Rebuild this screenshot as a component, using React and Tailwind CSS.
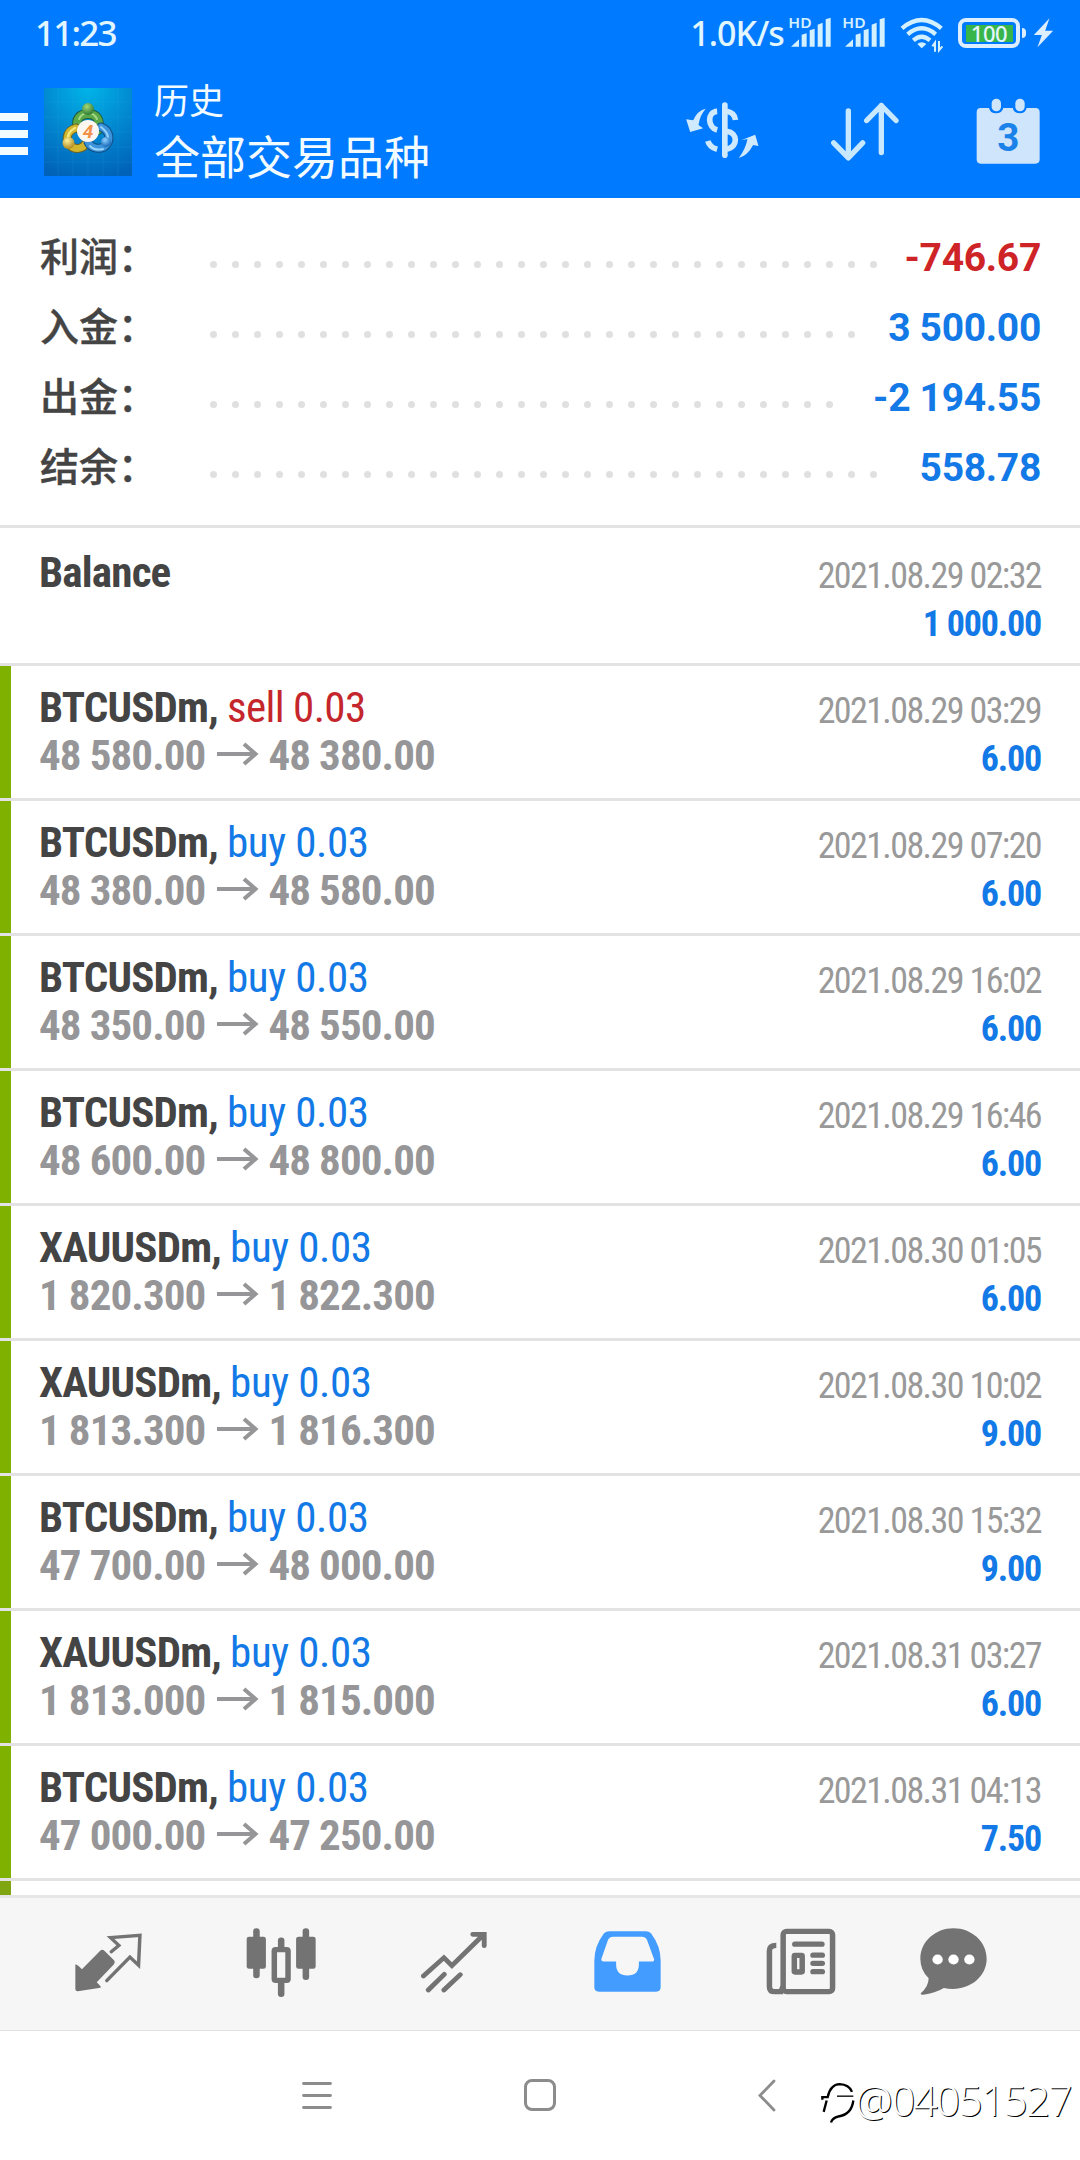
const totals = [
    { label: "利润：", value: "-746.67", color: "text-[#cf2427]", dots: 31 },
    { label: "入金：", value: "3 500.00", color: "text-[#1279e6]", dots: 30 },
    { label: "出金：", value: "-2 194.55", color: "text-[#1279e6]", dots: 29 },
    { label: "结余：", value: "558.78", color: "text-[#1279e6]", dots: 31 },
];

const deals = [
    { symbol: "BTCUSDm", side: "sell", from: "48 580.00", to: "48 380.00", time: "2021.08.29 03:29", profit: "6.00" },
    { symbol: "BTCUSDm", side: "buy", from: "48 380.00", to: "48 580.00", time: "2021.08.29 07:20", profit: "6.00" },
    { symbol: "BTCUSDm", side: "buy", from: "48 350.00", to: "48 550.00", time: "2021.08.29 16:02", profit: "6.00" },
    { symbol: "BTCUSDm", side: "buy", from: "48 600.00", to: "48 800.00", time: "2021.08.29 16:46", profit: "6.00" },
    { symbol: "XAUUSDm", side: "buy", from: "1 820.300", to: "1 822.300", time: "2021.08.30 01:05", profit: "6.00" },
    { symbol: "XAUUSDm", side: "buy", from: "1 813.300", to: "1 816.300", time: "2021.08.30 10:02", profit: "9.00" },
    { symbol: "BTCUSDm", side: "buy", from: "47 700.00", to: "48 000.00", time: "2021.08.30 15:32", profit: "9.00" },
    { symbol: "XAUUSDm", side: "buy", from: "1 813.000", to: "1 815.000", time: "2021.08.31 03:27", profit: "6.00" },
    { symbol: "BTCUSDm", side: "buy", from: "47 000.00", to: "47 250.00", time: "2021.08.31 04:13", profit: "7.50" },
];

const Signal = () => (
    <svg viewBox="-6 -24 138 120" className="w-[46px] h-10" fill="#d3f0ff">
        <text x="-2" y="36" fontSize="45" fontWeight="600" fontFamily="Noto Sans" textLength="70" lengthAdjust="spacingAndGlyphs">HD</text>
        <path d="M6 92 L30 70 V92Z M38 56 L53 52 V92 H38Z M62 43 L77 38 V92 H62Z M86 26 L101 20 V92 H86Z M110 10 L125 5 V92 H110Z" />
    </svg>
);

const StatusBar = () => (
    <div className="flex items-start h-[66px] pl-[35px] pr-[26px] text-[#e2f6ff] font-['Noto_Sans'] font-medium">
        <span className="mt-2 text-[35px] leading-[50px] tracking-[-1.8px]">11:23</span>
        <div className="flex items-start ml-auto">
            <span className="mt-2 mr-[3px] text-[34px] leading-[50px] tracking-[-0.9px]">1.0K/s</span>
            <div className="flex mt-2 gap-2">
                <Signal />
                <Signal />
            </div>
            <svg viewBox="718 50 132 108" className="w-11 h-9 mt-[17px] ml-[13px]" fill="none" stroke="#d3f0ff" strokeWidth="13">
                <path d="M724 84 Q783 34 842 84" />
                <path d="M741 102 Q783 66 825 102" />
                <path d="M758 120 Q783 98 808 120" />
                <path d="M770 131 Q783 120 797 131 L783 144Z" fill="#d3f0ff" stroke="none" />
                <path d="M823 154 V127 L815 138 M835 122 V150 L845 138" strokeWidth="6" />
            </svg>
            <div className="flex items-center mt-[18px] ml-[14px]">
                <div className="flex items-center justify-center w-[62px] h-[30px] rounded-[8px] border-4 border-[#dceeff]">
                    <span className="w-[47px] h-[17px] bg-[#37b44a] text-center text-[22px] leading-[17px] tracking-[-0.5px]">100</span>
                </div>
                <div className="w-1 h-[10px] ml-0.5 rounded-r bg-[#dceeff]" />
            </div>
            <svg viewBox="1120 54 62 90" className="w-[21px] h-[30px] mt-[18px] ml-[7px]" fill="#dceeff">
                <path d="M1169 55 L1122 105 H1146 L1133 142 L1180 92 H1156Z" />
            </svg>
        </div>
    </div>
);

const Logo = () => (
    <svg viewBox="0 0 88 88" className="w-[88px] h-[88px]">
        <defs>
            <radialGradient id="sky" cx="0.5" cy="0" r="1.05">
                <stop offset="0" stopColor="#00b4e8" />
                <stop offset="0.5" stopColor="#0288d0" />
                <stop offset="1" stopColor="#0062b8" />
            </radialGradient>
            <radialGradient id="green" cx="0.4" cy="0.3" r="0.7">
                <stop offset="0" stopColor="#a8d878" />
                <stop offset="1" stopColor="#2c7a35" />
            </radialGradient>
            <radialGradient id="yellow" cx="0.4" cy="0.3" r="0.7">
                <stop offset="0" stopColor="#fff09a" />
                <stop offset="1" stopColor="#b08a20" />
            </radialGradient>
            <radialGradient id="blue" cx="0.4" cy="0.3" r="0.7">
                <stop offset="0" stopColor="#8fd0ff" />
                <stop offset="1" stopColor="#1668b8" />
            </radialGradient>
        </defs>
        <rect width="88" height="88" fill="url(#sky)" />
        <path d="M14 0V88 M29 0V88 M44 0V88 M59 0V88 M74 0V88 M0 14H88 M0 29H88 M0 44H88 M0 59H88 M0 74H88" stroke="#4cc4f0" strokeOpacity="0.15" strokeWidth="0.8" />
        <g fill="none" strokeLinecap="round">
            <path d="M34 40 C31 31 36 26 44 26 C52 26 57 31 54 42" stroke="#1f5a3c" strokeWidth="10" />
            <path d="M34 40 C31 31 36 26 44 26 C52 26 57 31 54 42" stroke="#5aa848" strokeWidth="8" />
            <path d="M35 31 C37 27 40 25 44 25 C48 25 51 27 53 31" stroke="#a5d887" strokeWidth="2" />
            <path d="M32 40 C21 43 21 55 28 59 C33 62 40 60 42 55" stroke="#6f6420" strokeWidth="9" />
            <path d="M32 40 C21 43 21 55 28 59 C33 62 40 60 42 55" stroke="#d2b52e" strokeWidth="7" />
            <path d="M24 50 C24 45 27 42 31 40" stroke="#f4e77c" strokeWidth="2.500" />
            <path d="M57 39 C67 43 67 54 60 59 C53 62 46 59 44 54" stroke="#114f86" strokeWidth="9" />
            <path d="M57 39 C67 43 67 54 60 59 C53 62 46 59 44 54" stroke="#3d94da" strokeWidth="7" />
            <path d="M64 50 C64 45 61 42 57 39 M46 58 C50 62 55 62 59 61" stroke="#9ad4fa" strokeWidth="2" />
        </g>
        <circle cx="44" cy="21" r="6" fill="url(#green)" />
        <circle cx="24.500" cy="55" r="6" fill="url(#yellow)" />
        <circle cx="62" cy="54" r="5" fill="url(#blue)" />
        <circle cx="44" cy="43" r="11" fill="#fdf7f2" />
        <text x="44" y="50" textAnchor="middle" fontSize="19" fontWeight="700" fontStyle="italic" fontFamily="Roboto" fill="#f0924a">4</text>
    </svg>
);

const Toolbar = () => (
    <div className="flex items-start h-[132px] text-[#f2fbff] font-['Noto_Sans_CJK_SC',sans-serif]">
        <div className="flex flex-col gap-[9px] mt-[47px]">
            <div className="w-[28px] h-[8px] bg-[#f2fbff]" />
            <div className="w-[28px] h-[8px] bg-[#f2fbff]" />
            <div className="w-[28px] h-[8px] bg-[#f2fbff]" />
        </div>
        <div className="mt-[22px] ml-4">
            <Logo />
        </div>
        <div className="ml-[22px] mt-2">
            <p className="text-[35px] leading-[50px]">历史</p>
            <p className="text-[46px] leading-[60px]">全部交易品种</p>
        </div>
        {/* symbol filter, sorting, period */}
        <div className="flex items-start ml-auto mr-[40px]">
            <svg viewBox="78 306 218 168" className="w-[73px] h-14 mt-9" fill="none" stroke="#cfeaff" strokeWidth="17">
                <path d="M194 315 V466" strokeLinecap="round" />
                <path d="M171 334 C140 336 142 382 171 390" />
                <path d="M143 423 C147 437 156 444 171 448" />
                <path d="M200 334 C216 337 224 344 226 360" strokeLinecap="butt" />
                <path d="M200 394 C234 398 234 440 200 448" />
                <path d="M137 326 Q112 331 99 361 L78 358 L90 396 L129 385 L115 375 Q119 345 137 326Z M236 474 Q256 447 262 417 L243 421 L285 404 L295 438 L279 435 Q262 467 236 474Z" fill="#cfeaff" stroke="none" />
            </svg>
            <svg viewBox="514 306 204 176" className="w-[68px] h-[59px] mt-9 ml-[72px]" fill="none" stroke="#c8e8ff" strokeWidth="16" strokeLinecap="round" strokeLinejoin="round">
                <path d="M566 332 V472 M522 428 L566 473 L609 428" />
                <path d="M665 457 V316 M621 361 L665 316 L709 361" />
            </svg>
            <svg viewBox="948 294 192 198" className="w-16 h-[66px] mt-8 ml-[77px]">
                <path d="M962 324 H987 Q990 340 1008 340 Q1026 340 1030 324 H1058 Q1062 340 1080 340 Q1096 340 1100 324 H1126 Q1139 324 1139 337 V478 Q1139 491 1126 491 H962 Q950 491 950 478 V337 Q950 324 962 324Z" fill="#cfe5fb" />
                <rect x="991" y="292" width="36" height="46" rx="18" fill="#007aff" />
                <rect x="1062" y="292" width="36" height="46" rx="18" fill="#007aff" />
                <rect x="995" y="296" width="28" height="38" rx="14" fill="#cfe5fb" />
                <rect x="1066" y="296" width="28" height="38" rx="14" fill="#cfe5fb" />
                <text x="1045" y="454" textAnchor="middle" fontSize="116" fontWeight="700" fontFamily="Roboto" fill="#1a82e8">3</text>
            </svg>
        </div>
    </div>
);

const Totals = () => (
    <div className="h-[330px] pt-6 pl-[40px] pr-[39px] border-b-[3px] border-[#e3e3e3]">
        {totals.map((row) => (
            <div key={row.label} className="flex items-center h-[70px]">
                <span className="w-[170px] mb-[6px] text-[39px] font-medium leading-[64px] text-[#444] [-webkit-text-stroke:0.4px_#444] font-['Noto_Sans_CJK_SC',sans-serif]">{row.label}</span>
                <div className="flex gap-[15px] mt-[15px]">
                    {Array.from({ length: row.dots }, (_, i) => (
                        <span key={i} className="w-[7px] h-[7px] rounded-full bg-[#e0e0e0]" />
                    ))}
                </div>
                <span className={`ml-auto mt-[2px] text-[39px] font-bold leading-[68px] tracking-[-0.3px] whitespace-nowrap font-[Roboto] ${row.color}`}>{row.value}</span>
            </div>
        ))}
    </div>
);

const Arrow = () => (
    <svg viewBox="0 0 42 24" className="w-[42px] h-6 ml-[12px] mr-[9px] mb-[3px]" fill="none" stroke="#969698" strokeWidth="4">
        <path d="M0 12 H39 M27 2 L38.500 12 L27 22" />
    </svg>
);

const TimeAndProfit = ({ time, profit }) => (
    <div className="flex flex-col items-end ml-auto pt-[21px] pr-[39px] text-[36px] leading-[48px]">
        <span className="text-[#999] tracking-[-1.6px]">{time}</span>
        <span className="font-bold text-[#1279e6] tracking-[-1.2px]">{profit}</span>
    </div>
);

const Deal = ({ deal }) => (
    <div className="flex h-[135px] border-b-[3px] border-[#e3e3e3]">
        <div className="w-[11px] h-[132px] bg-[#7fb200]" />
        <div className="pt-[17px] pl-[28px] text-[43px] leading-[48px]">
            <p>
                <span className="font-bold text-[#444] tracking-[-0.8px]">{deal.symbol}, </span>
                <span className={deal.side === "sell" ? "text-[#c4262c] tracking-[-0.65px]" : "text-[#1279e6] tracking-[-0.4px]"}>{deal.side} 0.03</span>
            </p>
            <p className="flex items-center font-bold text-[#969698] tracking-[-0.9px]">
                {deal.from}
                <Arrow />
                {deal.to}
            </p>
        </div>
        <TimeAndProfit time={deal.time} profit={deal.profit} />
    </div>
);

const TabBar = () => (
    <div className="flex items-start h-[136px] shrink-0 pl-[75px] pt-[35px] bg-[#f6f6f6] border-t-[3px] border-b border-t-[#e6e6e6] border-b-[#e0e0e0]">
        <svg viewBox="218 280 194 176" preserveAspectRatio="none" className="w-[67px] h-[59px]" fill="#737373">
            <path d="M219 374 Q226 374 238 388 L291 333 Q297 327 303 333 L331 361 Q336 367 331 373 L281 427 L292 439 V443 L226 454 Q219 454 219 447Z" />
            <path d="M323 336 L345 317 L321 294 L406 287 L402 376 L377 352 L310 422" fill="none" stroke="#737373" strokeWidth="10" strokeLinecap="round" />
        </svg>
        <svg viewBox="714 262 204 206" preserveAspectRatio="none" className="w-[70px] h-[69px] -mt-[5px] ml-[104px]" fill="#737373">
            <rect x="716" y="288" width="56" height="96" rx="7" />
            <rect x="735" y="263" width="19" height="149" rx="9" />
            <rect x="860" y="288" width="57" height="96" rx="7" />
            <rect x="879" y="263" width="19" height="154" rx="9" />
            <rect x="807" y="290" width="19" height="40" rx="9" />
            <rect x="807" y="415" width="19" height="53" rx="9" />
            <rect x="796.500" y="326.500" width="40" height="92" rx="4" fill="#f6f6f6" stroke="#737373" strokeWidth="16" />
        </svg>
        <svg viewBox="1224 270 190 186" preserveAspectRatio="none" className="w-[66px] h-[62px] -mt-[2px] ml-[105px]" fill="none" stroke="#737373" strokeWidth="14" strokeLinecap="round" strokeLinejoin="round">
            <path d="M1231 405 L1290 350 L1313 374 L1403 282 M1373 280 H1406 V314" strokeLinejoin="miter" />
            <path d="M1245 447 L1291 400 M1290 447 L1337 401" />
        </svg>
        <svg viewBox="157 271 194 184" preserveAspectRatio="none" className="w-[67px] h-[61px] -mt-[2px] ml-[107px]">
            <path fillRule="evenodd" fill="#439cff" d="M202 272 H308 Q316 272 322 278 Q350 317 350 360 V440 Q350 454 337 454 H171 Q158 454 158 440 V360 Q158 317 186 278 Q192 272 202 272Z M212 288 Q202 288 198 297 L178 356 Q178 363 185 363 H221 V371 Q221 405 254 405 Q287 405 287 371 V363 H325 Q332 363 331 356 L310 297 Q306 288 296 288Z" />
        </svg>
        <svg viewBox="656 262 204 201" preserveAspectRatio="none" className="w-[70px] h-[67px] -mt-[5px] ml-[105px]" fill="none" stroke="#737373" strokeWidth="16">
            <rect x="706" y="272" width="144" height="181" rx="10" />
            <path d="M686 314 Q666 314 666 330 V438 Q666 453 682 453 H706 Q699 453 705 438" />
            <path d="M740 310.500 H819 M793 343.500 H820 M793 368 H820 M793 393 H820" strokeLinecap="round" />
            <rect x="738.500" y="344" width="23" height="50" rx="2" />
        </svg>
        <svg viewBox="1102 263 194 200" preserveAspectRatio="none" className="w-[67px] h-[67px] -mt-[5px] ml-[84px]">
            <path d="M1199 264 C1252 264 1295 304 1295 355 C1295 414 1236 457 1171 442 Q1146 458 1111 462 Q1101 462 1105 457 Q1127 437 1127 413 Q1103 390 1103 355 C1103 304 1146 264 1199 264Z" fill="#737373" />
            <circle cx="1153" cy="357" r="15" fill="#fff" />
            <circle cx="1199" cy="357" r="15" fill="#fff" />
            <circle cx="1245" cy="357" r="15" fill="#fff" />
        </svg>
    </div>
);

const SystemNav = () => (
    <div className="relative flex h-[129px] pt-[48px] pl-[302px] bg-white">
        <svg viewBox="0 0 30 33" className="w-[30px] h-[33px]" stroke="#8c8c8c" strokeWidth="2.800" strokeLinecap="round">
            <path d="M1.500 4.500 H28.500 M1.500 16.500 H28.500 M1.500 28.500 H28.500" />
        </svg>
        <div className="w-8 h-8 ml-[192px] border-[3px] border-[#8c8c8c] rounded-[8px]" />
        <svg viewBox="0 0 18 33" className="w-[18px] h-[33px] ml-[202px]" fill="none" stroke="#8c8c8c" strokeWidth="2.800" strokeLinecap="round">
            <path d="M16 2 L2 16.500 L16 31" />
        </svg>
        {/* author stamp over the corner of the screen */}
        <div className="absolute right-[9px] top-[43px] flex items-center text-white">
            <svg viewBox="34 40 102 128" className="w-[34px] h-[43px] mt-1" fill="none" stroke="#000" strokeWidth="7">
                <path d="M38 96 V88 H54 Q62 50 90 49 Q118 50 127 72" />
                <path d="M82 85 H131" strokeWidth="4" />
                <path d="M51 98 L42 132" />
                <path d="M131 98 Q126 140 86 146 Q68 150 64 164" />
            </svg>
            <span className="text-[42px] leading-[52px] font-light tracking-[-1.5px] font-['Noto_Sans'] [text-shadow:1px_1px_0.5px_#000]">@04051527</span>
        </div>
    </div>
);

export default function App() {
    return (
        <div className="flex flex-col w-[1080px] h-[2160px] overflow-hidden bg-white font-[Roboto]">
            <div className="h-[198px] shrink-0 bg-[#007aff]">
                <StatusBar />
                <Toolbar />
            </div>
            <div className="h-[1697px] shrink-0 overflow-hidden">
                <Totals />
                <div className="font-['Roboto_Condensed',Roboto] font-stretch-condensed">
                    <div className="flex h-[138px] pt-[3px] pl-[39px] border-b-[3px] border-[#e3e3e3]">
                        <span className="pt-[17px] text-[43px] leading-[48px] font-bold tracking-[-0.8px] text-[#444]">Balance</span>
                        <TimeAndProfit time="2021.08.29 02:32" profit="1 000.00" />
                    </div>
                    {deals.map((deal) => (
                        <Deal key={deal.time} deal={deal} />
                    ))}
                    <div className="w-[11px] h-[14px] bg-[#7fa510]" />
                </div>
            </div>
            <TabBar />
            <SystemNav />
        </div>
    );
}
